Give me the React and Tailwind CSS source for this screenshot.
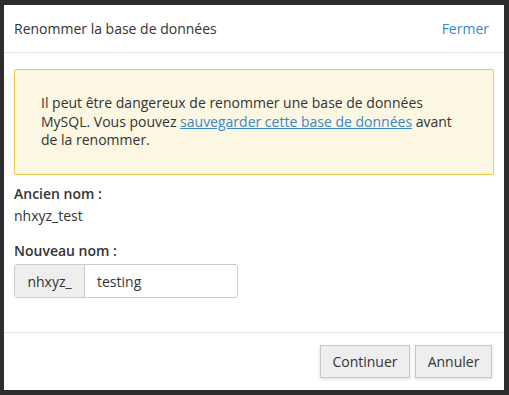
export default function App() {
  return (
    <div className="w-[509px] h-[395px] bg-[#2d2d2d] pt-[5px] pl-[4px]" style={{ fontFamily: '"Open Sans", sans-serif' }}>
      <div className="w-[500px] h-[385px] bg-white flex flex-col text-[#333]">
        <div className="h-[48px] flex items-center justify-between pl-[10px] pr-[15px] border-b border-[#e5e5e5]">
          <span className="text-[14px]">Renommer la base de données</span>
          <span className="text-[14px] text-[#3a87c8]">Fermer</span>
        </div>
        <div className="px-[10px] pt-[16px] flex-1">
          <div className="bg-[#fcf7e2] border border-[#f2c648] rounded-[2px] h-[106px] pl-[26px] pr-[40px] flex items-center">
            <p className="text-[14px] leading-[18.5px]">
              Il peut être dangereux de renommer une base de données MySQL. Vous pouvez{" "}
              <a className="text-[#3a87c8] underline">sauvegarder cette base de données</a> avant de la renommer.
            </p>
          </div>
          <div className="mt-[9px] text-[14px] font-semibold leading-[20px]">Ancien nom :</div>
          <div className="mt-[2px] text-[14px] leading-[20px]">nhxyz_test</div>
          <div className="mt-[15px] text-[14px] font-semibold leading-[20px]">Nouveau nom :</div>
          <div className="mt-[3px] flex w-[224px] h-[34px] border border-[#ccc] rounded-[3px] text-[14px]">
            <div className="w-[70px] bg-[#eee] border-r border-[#ccc] flex items-center justify-center">nhxyz_</div>
            <div className="flex-1 flex items-center pl-[12px]">testing</div>
          </div>
        </div>
        <div className="h-[58px] border-t border-[#e5e5e5] flex items-start justify-end gap-[5px] pr-[12px] pt-[12px]">
          <button className="w-[90px] h-[33px] bg-[#eee] border border-[#c8c8c8] text-[14px] shadow-[0_1px_3px_rgba(0,0,0,0.15)]">Continuer</button>
          <button className="w-[77px] h-[33px] bg-[#eee] border border-[#c8c8c8] text-[14px] shadow-[0_1px_3px_rgba(0,0,0,0.15)]">Annuler</button>
        </div>
      </div>
    </div>
  );
}
